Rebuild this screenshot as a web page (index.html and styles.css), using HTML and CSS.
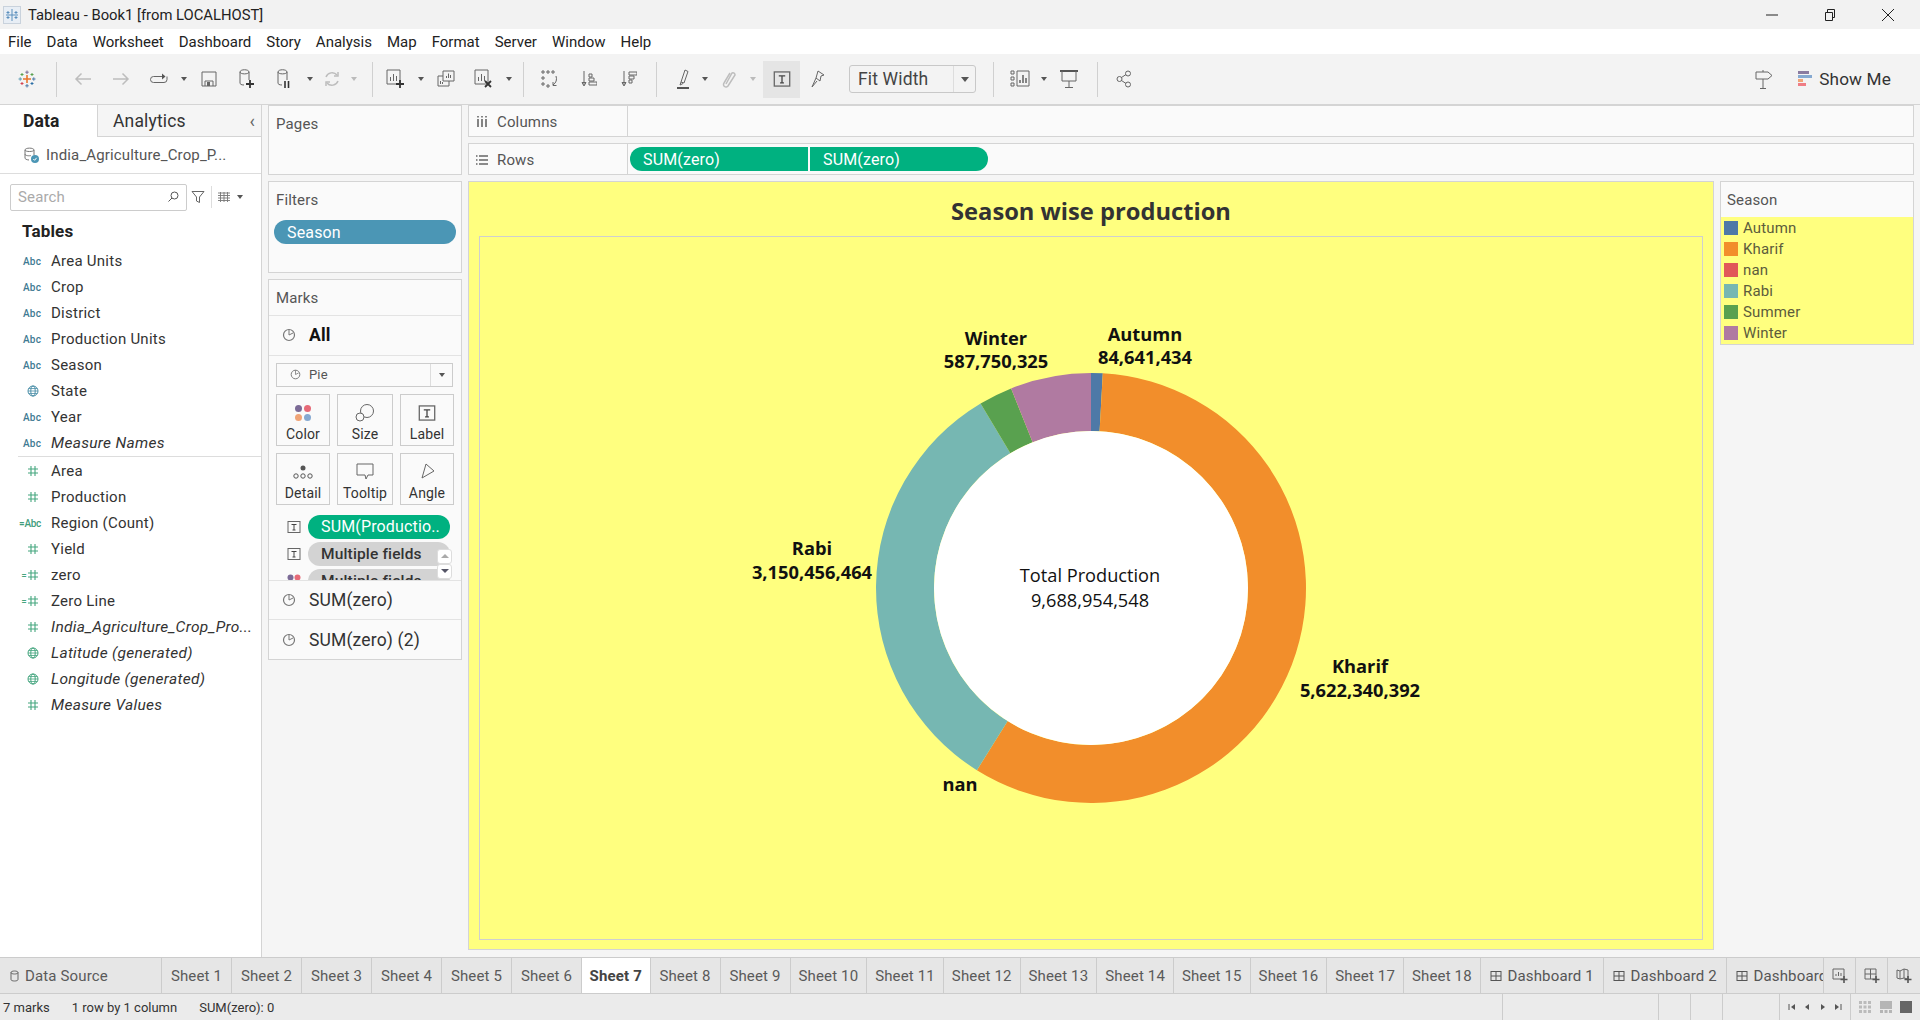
FILE: index.html
```html
<!DOCTYPE html>
<html lang="en">

<head>
    <meta charset="UTF-8">
    <title>Tableau - Book1 [from LOCALHOST]</title>
    <link rel="stylesheet" href="styles.css">
</head>

<body>
    <svg class="defs" width="0" height="0">
        <symbol id="ico-pie" viewBox="0 0 14 14">
            <circle cx="7" cy="7" r="5.5" fill="none" stroke="#777" stroke-width="1.2" />
            <path d="M7 7V1.5M7 7l4-2" fill="none" stroke="#777" />
        </symbol>
        <symbol id="ico-t" viewBox="0 0 14 14">
            <rect x="1" y="1.5" width="12" height="11" fill="none" stroke="#666" />
            <path d="M4.5 4.5h5M7 4.5v5.500M5.500 10h3" fill="none" stroke="#444" />
        </symbol>
        <symbol id="ico-globe" viewBox="0 0 12 12">
            <circle cx="6" cy="6" r="5" fill="none" stroke="currentColor" />
            <ellipse cx="6" cy="6" rx="2.200" ry="5" fill="none" stroke="currentColor" />
            <path d="M1 6h10M1.800 3.500h8.400M1.800 8.500h8.400" fill="none" stroke="currentColor" stroke-width=".8" />
        </symbol>
        <symbol id="ico-hash" viewBox="0 0 12 12">
            <path d="M4 1v10M8 1v10M1 4h10M1 8h10" fill="none" stroke="currentColor" stroke-width="1.100" />
        </symbol>
        <symbol id="ico-dash" viewBox="0 0 12 12">
            <rect x="1" y="1.500" width="10" height="9" fill="none" stroke="#555" />
            <path d="M6 1.500v9M1 6h10" fill="none" stroke="#555" />
        </symbol>
    </svg>

    <header class="titlebar">
        <svg class="app-icon" width="18" height="18" viewBox="0 0 18 18">
            <rect x="0.500" y="0.500" width="17" height="17" fill="#e8eef5" stroke="#c9d2dc" />
            <path d="M9 3v12M3 9h12M5 5v3M3.500 6.500h3M13 5v3M11.500 6.500h3M5 10v3M3.500 11.500h3M13 10v3M11.500 11.500h3" fill="none" stroke="#5b8fbd" />
        </svg>
        <span class="app-title">Tableau - Book1 [from LOCALHOST]</span>
        <div class="win-btns">
            <svg width="14" height="14" viewBox="0 0 14 14"><path d="M1 7h12" stroke="#222" fill="none" /></svg>
            <svg width="14" height="14" viewBox="0 0 14 14"><path d="M2.500 4.500h7v8h-7zM4.500 4.500v-3h7v8h-2" stroke="#222" fill="none" /></svg>
            <svg width="14" height="14" viewBox="0 0 14 14"><path d="M1 1l12 12M13 1L1 13" stroke="#222" fill="none" /></svg>
        </div>
    </header>

    <nav class="menubar">
        <span>File</span><span>Data</span><span>Worksheet</span><span>Dashboard</span><span>Story</span><span>Analysis</span><span>Map</span><span>Format</span><span>Server</span><span>Window</span><span>Help</span>
    </nav>

    <div class="toolbar">
        <div class="group logo-group">
            <svg width="18" height="18" viewBox="0 0 18 18">
                <path d="M9 5v8M5 9h8" stroke="#e8762d" stroke-width="1.600" fill="none" />
                <path d="M9 0.500v3.500M7.300 2.200h3.400" stroke="#7b6a96" fill="none" />
                <path d="M9 14v3.500M7.300 15.800h3.400" stroke="#4e79a7" fill="none" />
                <path d="M0.500 9h3.500M2.200 7.300v3.400" stroke="#5a9bb5" fill="none" />
                <path d="M14 9h3.500M15.800 7.300v3.400" stroke="#4e79a7" fill="none" />
                <path d="M4 3v3M2.500 4.500h3M14 3v3M12.500 4.500h3" stroke="#59a14f" fill="none" />
                <path d="M4 12v3M2.500 13.500h3" stroke="#d64550" fill="none" />
                <path d="M14 12v3M12.500 13.500h3" stroke="#2a6ea6" fill="none" />
            </svg>
        </div>
        <div class="group g-file">
            <span class="tool"><svg width="18" height="14" viewBox="0 0 18 14"><path d="M17 7H2M7.500 1.500L2 7l5.500 5.500" class="ln-off" /></svg></span>
            <span class="tool"><svg width="18" height="14" viewBox="0 0 18 14"><path d="M1 7h15M10.500 1.500L16 7l-5.500 5.500" class="ln-off" /></svg></span>
            <span class="tool"><svg width="20" height="14" viewBox="0 0 20 14"><path d="M16 4.500H4.500a3 3 0 0 0 0 6H15a3 3 0 0 0 3-3v-3" class="ln" /><path d="M13 1.500l3.500 3-3.500 3z" fill="#555" /></svg></span>
            <span class="caret"></span>
            <span class="tool"><svg width="16" height="16" viewBox="0 0 16 16"><path d="M1 1h14v14H1zM4 15v-5h8v5" class="ln" /><path d="M6 11h3v4H6z" fill="#666" /></svg></span>
            <span class="tool"><svg width="18" height="20" viewBox="0 0 18 20"><path d="M2 3c0-3 9-3 9 0v8M2 3v11c0 1 1 2 4 2M2 3c0 2.500 9 2.500 9 0" class="ln" /><path d="M12 11v8M8 15h8" stroke="#333" stroke-width="1.800" fill="none" /></svg></span>
            <span class="tool"><svg width="18" height="20" viewBox="0 0 18 20"><path d="M2 3c0-3 9-3 9 0v8M2 3v11c0 1 1 2 4 2M2 3c0 2.500 9 2.500 9 0" class="ln" /><path d="M9 12v7M12.500 12v7" stroke="#333" stroke-width="1.600" fill="none" /></svg></span>
            <span class="caret"></span>
            <span class="tool w32"><svg width="18" height="18" viewBox="0 0 18 18"><path d="M3 7a6.500 6.500 0 0 1 11-2M15 11a6.500 6.500 0 0 1-11 2" class="ln-off" /><path d="M15 2v4h-4M3 16v-4h4" class="ln-off" /></svg></span>
            <span class="caret off"></span>
        </div>
        <div class="group g-sheet">
            <span class="tool"><svg width="20" height="20" viewBox="0 0 20 20"><path d="M1 1h13v14H1z" class="ln" /><path d="M4.500 12V8M7.500 12V5M10.500 12V7" class="ln" /><path d="M14 11v8M10 15h8" stroke="#333" stroke-width="1.800" fill="none" /></svg></span>
            <span class="caret"></span>
            <span class="tool"><svg width="18" height="18" viewBox="0 0 18 18"><path d="M6 1h11v10H6zM1 6h5M1 6v10h11v-5" class="ln" /><path d="M9.500 8V6M11.500 8V3.500M13.500 8V5M3.500 14v-3M5.500 14v-2" class="ln" /></svg></span>
            <span class="tool"><svg width="20" height="20" viewBox="0 0 20 20"><path d="M1 1h13v14H1z" class="ln" /><path d="M4.500 12V8M7.500 12V5M10.500 12V7" class="ln" /><path d="M11 12l6 6M17 12l-6 6" stroke="#333" stroke-width="1.800" fill="none" /></svg></span>
            <span class="caret"></span>
        </div>
        <div class="group g-sort">
            <span class="tool w40"><svg width="18" height="20" viewBox="0 0 18 20"><path d="M2 2h2v2H2zM7 2h2v2H7zM12 2h2v2h-2zM2 8h2v2H2zM2 14h2v2H2zM7 16h2v2H7z" class="ln" /><path d="M16 7a8 8 0 0 1-3 9M13 13v3.500h3.500" class="ln" /></svg></span>
            <span class="tool w40"><svg width="16" height="18" viewBox="0 0 16 18"><path d="M3 1v14M1 12.500L3 16l2-3.500z" class="ln" /><path d="M8 4h3v3H8zM8 8h5v3H8zM8 12h8v3H8z" class="ln" /></svg></span>
            <span class="tool w40"><svg width="16" height="18" viewBox="0 0 16 18"><path d="M3 1v14M1 12.500L3 16l2-3.500z" class="ln" /><path d="M8 2h8v3H8zM8 6h5v3H8zM8 10h3v3H8z" class="ln" /></svg></span>
        </div>
        <div class="group g-mark">
            <span class="tool w32"><svg width="14" height="22" viewBox="0 0 14 22"><path d="M5 14L9 2l3 1.500L8 15zM5 14l-1 3 3-1.500" class="ln" /><path d="M1 20h12" stroke="#555" stroke-width="2" fill="none" /></svg></span>
            <span class="caret"></span>
            <span class="tool w36"><svg width="14" height="20" viewBox="0 0 14 20"><path d="M4 15l6-11a2 2 0 0 1 3 2L6 17a2.500 2.500 0 0 1-4-3l6-10" class="ln-off" /></svg></span>
            <span class="caret off"></span>
            <span class="tool t-active"><svg width="18" height="18"><use href="#ico-t" /></svg></span>
            <span class="tool w36"><svg width="14" height="18" viewBox="0 0 14 18"><path d="M7 1l6 4-3 1-1 5-4-3zM5 8l-4 9 5-6" class="ln" /></svg></span>
            <div class="fit-select"><span class="fit-text">Fit Width</span><span class="fit-arrow"><span class="caret big"></span></span></div>
        </div>
        <div class="group g-show">
            <span class="tool w36"><svg width="20" height="18" viewBox="0 0 20 18"><path d="M1 1h3v3H1zM1 7h3v3H1zM1 13h3v3H1zM7 1h12v15H7z" class="ln" /><path d="M10 13v-3M13 13V5M16 13V8" stroke="#555" stroke-width="1.400" fill="none" /></svg></span>
            <span class="caret"></span>
            <span class="tool"><svg width="18" height="20" viewBox="0 0 18 20"><path d="M0 2h18" stroke="#555" stroke-width="2" /><path d="M2 2v10h14V2M9 12v6M5 18.500h8" class="ln" /></svg></span>
        </div>
        <div class="group g-share">
            <span class="tool"><svg width="16" height="18" viewBox="0 0 16 18"><circle cx="12" cy="3.500" r="2.500" class="ln" /><circle cx="3.500" cy="9" r="2.500" class="ln" /><circle cx="12" cy="14.500" r="2.500" class="ln" /><path d="M5.500 7.500l4.500-3M5.500 10.500l4.500 3" class="ln" /></svg></span>
        </div>
        <div class="toolbar-right">
            <svg width="18" height="20" viewBox="0 0 18 20"><path d="M1 3h12l4 3.500L13 10H1zM8 1v2M8 10v9M5 19.500h6" class="ln" /></svg>
            <div class="showme">
                <svg width="14" height="16" viewBox="0 0 14 16">
                    <rect width="11" height="3" fill="#8a7ba0" />
                    <rect y="4" width="14" height="3" fill="#86a9d1" />
                    <rect y="8" width="5" height="3" fill="#f0a477" />
                    <rect y="12" width="8" height="3" fill="#ef7d85" />
                </svg>
                <span>Show Me</span>
            </div>
        </div>
    </div>

    <main class="work">
        <aside class="data-pane">
            <div class="pane-tabs">
                <div class="pane-tab current">Data</div>
                <div class="pane-tab other">Analytics<span class="chev">&#8249;</span></div>
            </div>
            <div class="source">
                <svg width="17" height="17" viewBox="0 0 17 17"><path d="M2 3c0-2.500 9-2.500 9 0v5M2 3v8c0 1 1.500 1.800 4 2M2 3c0 2 9 2 9 0M2 7c0 2 5 2 6 1.500" fill="none" stroke="#777" /><circle cx="12" cy="12" r="4" fill="#4b96b5" /><path d="M10.300 12l1.300 1.300 2-2.500" fill="none" stroke="#fff" /></svg>
                <span>India_Agriculture_Crop_P...</span>
            </div>
            <div class="search-row">
                <div class="search"><span>Search</span><svg width="12" height="12" viewBox="0 0 12 12"><circle cx="7.500" cy="4.500" r="3.500" fill="none" stroke="#555" /><path d="M5 7l-3.500 3.500" stroke="#555" fill="none" /></svg></div>
                <svg width="14" height="14" viewBox="0 0 14 14"><path d="M1 1.500h12L8.500 7v5.500l-3-1.500V7z" fill="none" stroke="#666" /></svg>
                <span class="vsep"></span>
                <svg width="12" height="10" viewBox="0 0 12 10"><path d="M0 1h12M0 3.500h12M0 6h12M0 8.500h12M2.500 0v10M6 0v10M9.500 0v10" stroke="#777" stroke-width=".9" fill="none" /></svg>
                <span class="caret"></span>
            </div>
            <h2 class="tables">Tables</h2>
            <ul class="fields">
                <li><i class="abc">Abc</i>Area Units</li>
                <li><i class="abc">Abc</i>Crop</li>
                <li><i class="abc">Abc</i>District</li>
                <li><i class="abc">Abc</i>Production Units</li>
                <li><i class="abc">Abc</i>Season</li>
                <li><i class="ftype dim"><svg width="12" height="12"><use href="#ico-globe" /></svg></i>State</li>
                <li><i class="abc">Abc</i>Year</li>
                <li class="gen"><i class="abc">Abc</i>Measure Names</li>
            </ul>
            <ul class="fields measures">
                <li><i class="ftype mea"><svg width="12" height="12"><use href="#ico-hash" /></svg></i>Area</li>
                <li><i class="ftype mea"><svg width="12" height="12"><use href="#ico-hash" /></svg></i>Production</li>
                <li><i class="abc calc">=Abc</i>Region (Count)</li>
                <li><i class="ftype mea"><svg width="12" height="12"><use href="#ico-hash" /></svg></i>Yield</li>
                <li><i class="ftype mea eq">=<svg width="12" height="12"><use href="#ico-hash" /></svg></i>zero</li>
                <li><i class="ftype mea eq">=<svg width="12" height="12"><use href="#ico-hash" /></svg></i>Zero Line</li>
                <li class="gen"><i class="ftype mea"><svg width="12" height="12"><use href="#ico-hash" /></svg></i>India_Agriculture_Crop_Pro...</li>
                <li class="gen"><i class="ftype mea"><svg width="12" height="12"><use href="#ico-globe" /></svg></i>Latitude (generated)</li>
                <li class="gen"><i class="ftype mea"><svg width="12" height="12"><use href="#ico-globe" /></svg></i>Longitude (generated)</li>
                <li class="gen"><i class="ftype mea"><svg width="12" height="12"><use href="#ico-hash" /></svg></i>Measure Values</li>
            </ul>
        </aside>

        <section class="cards-col">
            <div class="card pages"><div class="card-title">Pages</div></div>
            <div class="card filters">
                <div class="card-title">Filters</div>
                <div class="pill blue">Season</div>
            </div>
            <div class="card marks">
                <div class="card-title marks-title">Marks</div>
                <div class="mark-row all"><svg width="14" height="14"><use href="#ico-pie" /></svg><b>All</b></div>
                <div class="marks-body">
                    <div class="mark-select"><svg width="11" height="11"><use href="#ico-pie" /></svg><span>Pie</span><span class="mark-arrow"><span class="caret"></span></span></div>
                    <div class="mark-btns">
                        <div class="mark-btn">
                            <svg width="18" height="18" viewBox="0 0 18 18"><circle cx="4.500" cy="4.500" r="3.500" fill="#7b6a96" /><circle cx="13.500" cy="4.500" r="3.500" fill="#e66a78" /><circle cx="4.500" cy="13.500" r="3.500" fill="#f0a477" /><circle cx="13.500" cy="13.500" r="3.500" fill="#86a9d1" /></svg>
                            <span>Color</span>
                        </div>
                        <div class="mark-btn">
                            <svg width="20" height="18" viewBox="0 0 20 18"><circle cx="12" cy="7" r="6.500" fill="#fafafa" stroke="#666" /><circle cx="5" cy="13" r="4" fill="#fafafa" stroke="#666" /></svg>
                            <span>Size</span>
                        </div>
                        <div class="mark-btn">
                            <svg width="18" height="18"><use href="#ico-t" /></svg>
                            <span>Label</span>
                        </div>
                        <div class="mark-btn">
                            <svg width="20" height="18" viewBox="0 0 20 18"><circle cx="10" cy="5" r="2.500" fill="#555" /><circle cx="3" cy="13" r="2.200" fill="none" stroke="#555" /><circle cx="10" cy="13" r="2.200" fill="none" stroke="#555" /><circle cx="17" cy="13" r="2.200" fill="none" stroke="#555" /></svg>
                            <span>Detail</span>
                        </div>
                        <div class="mark-btn">
                            <svg width="18" height="18" viewBox="0 0 18 18"><path d="M1 1h16v11h-5l-2 4-1-4H1z" fill="none" stroke="#666" /></svg>
                            <span>Tooltip</span>
                        </div>
                        <div class="mark-btn">
                            <svg width="16" height="18" viewBox="0 0 16 18"><path d="M7 1l8 7-12 7z" fill="none" stroke="#666" /></svg>
                            <span>Angle</span>
                        </div>
                    </div>
                    <div class="mark-list">
                        <div class="mark-field"><svg width="14" height="14"><use href="#ico-t" /></svg><div class="pill green">SUM(Productio..</div></div>
                        <div class="mark-field"><svg width="14" height="14"><use href="#ico-t" /></svg><div class="pill grey">Multiple fields</div></div>
                        <div class="mark-field"><svg width="14" height="14" viewBox="0 0 14 14"><circle cx="3.500" cy="3.500" r="3" fill="#7b6a96" /><circle cx="10.500" cy="3.500" r="3" fill="#e66a78" /><circle cx="3.500" cy="10.500" r="3" fill="#f0a477" /><circle cx="10.500" cy="10.500" r="3" fill="#86a9d1" /></svg><div class="pill grey">Multiple fields</div></div>
                        <div class="scroll-btns">
                            <span class="scroll-btn"><span class="tri up"></span></span>
                            <span class="scroll-btn"><span class="tri down"></span></span>
                        </div>
                    </div>
                </div>
                <div class="mark-row sub"><svg width="14" height="14"><use href="#ico-pie" /></svg><span>SUM(zero)</span></div>
                <div class="mark-row sub"><svg width="14" height="14"><use href="#ico-pie" /></svg><span>SUM(zero) (2)</span></div>
            </div>
        </section>

        <section class="main-col">
            <div class="shelf">
                <div class="shelf-label"><svg width="12" height="12" viewBox="0 0 12 12"><path d="M2 3v8M6 3v8M10 3v8" stroke="#666" stroke-width="1.600" /><path d="M2 0v1.500M6 0v1.500M10 0v1.500" stroke="#666" stroke-width="1.600" /></svg>Columns</div>
            </div>
            <div class="shelf rows">
                <div class="shelf-label"><svg width="12" height="12" viewBox="0 0 12 12"><path d="M3 2h9M3 6h9M3 10h9M0 2h1.500M0 6h1.500M0 10h1.500" stroke="#666" stroke-width="1.400" /></svg>Rows</div>
                <div class="shelf-pills">
                    <div class="pill green first">SUM(zero)</div>
                    <div class="pill green last">SUM(zero)</div>
                </div>
            </div>
            <div class="canvas-row">
                <div class="viz">
                    <h1 class="viz-title">Season wise production</h1>
                    <div class="plot">
                        <svg class="donut" width="1223" height="702" viewBox="0 0 1223 702">
                            <path fill="#4e79a7" d="M611 136A215 215 0 0 1 622.800 136.300L619.600 194.200A157 157 0 0 0 611 194Z" />
                            <path fill="#f28e2b" d="M622.800 136.300A215 215 0 1 1 496.900 533.200L527.700 484.100A157 157 0 1 0 619.600 194.200Z" />
                            <path fill="#76b7b2" d="M496.900 533.200A215 215 0 0 1 500.600 166.500L530.400 216.300A157 157 0 0 0 527.700 484.100Z" />
                            <path fill="#59a14f" d="M500.600 166.500A215 215 0 0 1 531.100 151.400L552.600 205.300A157 157 0 0 0 530.400 216.300Z" />
                            <path fill="#b07aa1" d="M531.100 151.400A215 215 0 0 1 611 136L611 194A157 157 0 0 0 552.600 205.300Z" />
                            <circle cx="611" cy="351" r="157" fill="#fff" />
                            <text class="lbl" text-anchor="middle" x="516" y="108">Winter</text>
                            <text class="lbl" text-anchor="middle" x="516" y="131">587,750,325</text>
                            <text class="lbl" text-anchor="middle" x="665" y="104">Autumn</text>
                            <text class="lbl" text-anchor="middle" x="665" y="127">84,641,434</text>
                            <text class="lbl" text-anchor="middle" x="332" y="318">Rabi</text>
                            <text class="lbl" text-anchor="middle" x="332" y="342">3,150,456,464</text>
                            <text class="lbl" text-anchor="middle" x="880" y="436">Kharif</text>
                            <text class="lbl" text-anchor="middle" x="880" y="460">5,622,340,392</text>
                            <text class="lbl" text-anchor="middle" x="480" y="554">nan</text>
                            <text class="lbl center" text-anchor="middle" x="610" y="345">Total Production</text>
                            <text class="lbl center" text-anchor="middle" x="610" y="370">9,688,954,548</text>
                        </svg>
                    </div>
                </div>
                <aside class="legend">
                    <div class="legend-title">Season</div>
                    <ul class="legend-list">
                        <li><i class="sw s-autumn"></i>Autumn</li>
                        <li><i class="sw s-kharif"></i>Kharif</li>
                        <li><i class="sw s-nan"></i>nan</li>
                        <li><i class="sw s-rabi"></i>Rabi</li>
                        <li><i class="sw s-summer"></i>Summer</li>
                        <li><i class="sw s-winter"></i>Winter</li>
                    </ul>
                </aside>
            </div>
        </section>
    </main>

    <footer>
        <div class="tabbar">
            <div class="tabs">
                <div class="tab source-tab"><svg width="9" height="12" viewBox="0 0 9 12"><path d="M1 2.500c0-2 7-2 7 0v7c0 2-7 2-7 0zM1 2.500c0 2 7 2 7 0" fill="none" stroke="#666" /></svg>Data Source</div>
                <div class="tab">Sheet 1</div>
                <div class="tab">Sheet 2</div>
                <div class="tab">Sheet 3</div>
                <div class="tab">Sheet 4</div>
                <div class="tab">Sheet 5</div>
                <div class="tab">Sheet 6</div>
                <div class="tab current">Sheet 7</div>
                <div class="tab">Sheet 8</div>
                <div class="tab">Sheet 9</div>
                <div class="tab wide">Sheet 10</div>
                <div class="tab wide">Sheet 11</div>
                <div class="tab wide">Sheet 12</div>
                <div class="tab wide">Sheet 13</div>
                <div class="tab wide">Sheet 14</div>
                <div class="tab wide">Sheet 15</div>
                <div class="tab wide">Sheet 16</div>
                <div class="tab wide">Sheet 17</div>
                <div class="tab wide">Sheet 18</div>
                <div class="tab dash"><svg width="12" height="12"><use href="#ico-dash" /></svg>Dashboard 1</div>
                <div class="tab dash"><svg width="12" height="12"><use href="#ico-dash" /></svg>Dashboard 2</div>
                <div class="tab dash"><svg width="12" height="12"><use href="#ico-dash" /></svg>Dashboard 3</div>
            </div>
            <div class="tab-add"><svg width="16" height="16" viewBox="0 0 16 16"><path d="M1 1h11v10H1zM4 8V6M6.500 8V4M9 8V5" class="ln" /><path d="M12 8v7M8.500 11.500h7" stroke="#555" stroke-width="1.600" /></svg></div>
            <div class="tab-add"><svg width="16" height="16" viewBox="0 0 16 16"><path d="M1 1h11v10H1zM6.500 1v10M1 6h11" class="ln" /><path d="M12 8v7M8.500 11.500h7" stroke="#555" stroke-width="1.600" /></svg></div>
            <div class="tab-add"><svg width="16" height="16" viewBox="0 0 16 16"><path d="M1 2l3 1 4-2 4 1v9l-4-1-4 1-3-1zM4 3v8M8 1v9" class="ln" /><path d="M12 8v7M8.500 11.500h7" stroke="#555" stroke-width="1.600" /></svg></div>
        </div>
        <div class="statusbar">
            <span class="st st1">7 marks</span>
            <span class="st st2">1 row by 1 column</span>
            <span class="st st3">SUM(zero): 0</span>
            <span class="st-cell c1"></span>
            <span class="st-cell c2"></span>
            <span class="st-cell c3"></span>
            <span class="st-cell c4"></span>
            <div class="st-cell pager">
                <svg width="8" height="8" viewBox="0 0 8 8"><path d="M1 1v6" stroke="#555" /><path d="M7 1v6L3 4z" fill="#555" /></svg>
                <svg width="8" height="8" viewBox="0 0 8 8"><path d="M6 1v6L2 4z" fill="#555" /></svg>
                <svg width="8" height="8" viewBox="0 0 8 8"><path d="M2 1v6l4-3z" fill="#555" /></svg>
                <svg width="8" height="8" viewBox="0 0 8 8"><path d="M7 1v6" stroke="#555" /><path d="M1 1v6l4-3z" fill="#555" /></svg>
            </div>
            <div class="st-cell views">
                <svg width="12" height="12" viewBox="0 0 12 12"><path d="M0 0h3v3H0zM4.500 0h3v3h-3zM9 0h3v3H9zM0 4.500h3v3H0zM4.500 4.500h3v3h-3zM9 4.500h3v3H9zM0 9h3v3H0zM4.500 9h3v3h-3zM9 9h3v3H9z" fill="#bbb" /></svg>
                <svg width="12" height="12" viewBox="0 0 12 12"><path d="M0 0h12v8H0zM0 9h3v3H0zM4.500 9h3v3h-3zM9 9h3v3H9z" fill="#b5b5b5" /></svg>
                <svg width="12" height="12" viewBox="0 0 12 12"><path d="M0 0h12v12H0z" fill="#666" /></svg>
            </div>
        </div>
    </footer>
</body>

</html>
```

FILE: styles.css
```css
* {
    box-sizing: border-box;
}

html,
body {
    margin: 0;
    height: 100%;
    overflow: hidden;
}

body {
    display: flex;
    flex-direction: column;
    width: 1920px;
    height: 1020px;
    font-family: Roboto, "Noto Sans", sans-serif;
    font-size: 15px;
    letter-spacing: 0.15px;
    color: #444;
    background: #f5f5f5;
}

ul {
    list-style: none;
    margin: 0;
    padding: 0;
}

i {
    font-style: normal;
}

.defs {
    position: absolute;
}

.ln {
    fill: none;
    stroke: #666;
}

.ln-off {
    fill: none;
    stroke: #bdbdbd;
    stroke-width: 1.5;
}

/* title + menu */
.titlebar {
    height: 29px;
    background: #f2f2f2;
    display: flex;
    align-items: center;
    padding-left: 3px;
    font-size: 14.8px;
    letter-spacing: 0;
    color: #222;
}

.app-title {
    margin-left: 7px;
}

.win-btns {
    margin-left: auto;
    display: flex;
    gap: 44px;
    padding-right: 25px;
}

.menubar {
    height: 25px;
    background: #fff;
    display: flex;
    align-items: center;
    gap: 15px;
    padding-left: 8px;
    letter-spacing: 0;
    color: #222;
}

/* toolbar */
.toolbar {
    height: 51px;
    background: #f3f3f3;
    border-bottom: 1px solid #d4d4d4;
    display: flex;
    align-items: center;
}

.group {
    display: flex;
    align-items: center;
    height: 35px;
    border-right: 1px solid #d0d0d0;
}

.logo-group {
    width: 57px;
    padding-left: 18px;
}

.g-file {
    width: 316px;
    padding-left: 7px;
}

.g-sheet {
    width: 151px;
    padding-left: 4px;
}

.g-sort {
    width: 133px;
    padding-left: 5px;
}

.g-mark {
    width: 337px;
    padding-left: 10px;
}

.g-show {
    width: 104px;
    padding-left: 8px;
}

.g-share {
    border-right: 0;
    padding-left: 7px;
}

.tool {
    width: 38px;
    height: 35px;
    display: flex;
    align-items: center;
    justify-content: center;
    flex: none;
}

.w32 {
    width: 32px;
}

.w36 {
    width: 36px;
}

.w40 {
    width: 40px;
}

.t-active {
    width: 37px;
    height: 37px;
    margin-left: 4px;
    background: #e5e5e5;
}

.caret {
    flex: none;
    width: 0;
    height: 0;
    margin: 0 3px;
    border-left: 3px solid transparent;
    border-right: 3px solid transparent;
    border-top: 4px solid #555;
}

.caret.off {
    border-top-color: #bbb;
}

.caret.big {
    border-left-width: 4px;
    border-right-width: 4px;
    border-top-width: 5px;
}

.fit-select {
    width: 127px;
    height: 28px;
    margin-left: 13px;
    border: 1px solid #c8c8c8;
    border-radius: 3px;
    display: flex;
    align-items: center;
    font-size: 17.5px;
    color: #444;
}

.fit-text {
    flex: 1;
    padding-left: 8px;
}

.fit-arrow {
    width: 22px;
    height: 100%;
    border-left: 1px solid #ddd;
    display: flex;
    align-items: center;
    justify-content: center;
}

.toolbar-right {
    margin-left: auto;
    display: flex;
    align-items: center;
    gap: 25px;
    padding-right: 29px;
}

.showme {
    display: flex;
    align-items: center;
    gap: 7px;
    font-size: 17.2px;
    color: #333;
}

/* work area */
.work {
    height: 852px;
    display: flex;
}

.data-pane {
    width: 262px;
    background: #fff;
    border-right: 1px solid #d4d4d4;
    color: #333;
}

.pane-tabs {
    height: 32px;
    display: flex;
    font-size: 17.5px;
}

.pane-tab {
    display: flex;
    align-items: center;
}

.pane-tab.current {
    width: 98px;
    padding-left: 23px;
    font-weight: 700;
    color: #222;
    border-right: 1px solid #d4d4d4;
}

.pane-tab.other {
    flex: 1;
    padding-left: 15px;
    background: #f5f5f5;
    border-bottom: 1px solid #d4d4d4;
    position: relative;
}

.chev {
    margin-left: auto;
    margin-right: 6px;
    color: #666;
    font-size: 18px;
}

.source {
    height: 37px;
    display: flex;
    align-items: center;
    gap: 6px;
    padding-left: 23px;
    border-bottom: 1px solid #ddd;
    color: #555;
}

.search-row {
    display: flex;
    align-items: center;
    height: 46px;
    padding-left: 10px;
}

.search {
    width: 177px;
    height: 27px;
    border: 1px solid #ccc;
    border-radius: 2px;
    display: flex;
    align-items: center;
    justify-content: space-between;
    padding: 0 7px;
    margin-right: 4px;
    color: #aaa;
}

.vsep {
    width: 1px;
    height: 22px;
    margin: 0 6px 0 6px;
    background: #ddd;
}

.search-row .caret {
    margin-left: 7px;
}

.tables {
    margin: 0 0 6px;
    height: 22px;
    padding-left: 22px;
    font-size: 17px;
    line-height: 22px;
    font-weight: 700;
    color: #222;
}

.fields li {
    height: 26px;
    display: flex;
    align-items: center;
    white-space: nowrap;
    letter-spacing: 0.25px;
}

.fields i {
    flex: none;
    width: 41px;
    margin-right: 10px;
    text-align: right;
}

.fields .gen {
    font-style: italic;
    font-size: 15.5px;
    letter-spacing: 0.3px;
}

.measures {
    border-top: 1px solid #ddd;
    margin-left: 18px;
    padding-top: 1px;
}

.measures i {
    width: 23px;
}

.fields .abc {
    font-size: 10px;
    font-style: normal;
    font-weight: 500;
    letter-spacing: 0.15px;
    color: #3f7a92;
}

.fields .abc.calc {
    color: #3f9d7c;
    letter-spacing: -0.3px;
}

.fields .ftype {
    display: flex;
    align-items: center;
    justify-content: flex-end;
    padding-right: 2px;
    font-style: normal;
    font-size: 10px;
}

.ftype.dim {
    color: #4b8fa8;
}

.ftype.mea {
    color: #45a67f;
}

.cards-col {
    width: 194px;
    margin-left: 6px;
    display: flex;
    flex-direction: column;
    gap: 6px;
    padding-top: 0;
}

.card {
    background: #fafafa;
    border: 1px solid #d4d4d4;
}

.card-title {
    color: #555;
    padding-left: 7px;
}

.pages {
    height: 70px;
    padding-top: 9px;
}

.filters {
    height: 92px;
    padding-top: 9px;
}

.pill {
    height: 24px;
    border-radius: 12px;
    display: flex;
    align-items: center;
    padding-left: 13px;
    white-space: nowrap;
    font-size: 16px;
}

.pill.blue {
    margin: 11px 5px 0;
    background: #4b96b5;
    color: #fff;
}

.pill.green {
    background: #00b180;
    color: #fff;
}

.pill.grey {
    background: #d3d3d3;
    color: #333;
    font-size: 15.5px;
    font-weight: 500;
}

.marks {
    height: 381px;
    display: flex;
    flex-direction: column;
}

.marks-title {
    height: 36px;
    line-height: 36px;
    border-bottom: 1px solid #e3e3e3;
}

.mark-row {
    display: flex;
    align-items: center;
    gap: 13px;
    padding-left: 13px;
    height: 40px;
    color: #333;
    font-size: 17.5px;
}

.mark-row b {
    color: #111;
    font-weight: 700;
}

.mark-row.all {
    border-bottom: 1px solid #e3e3e3;
}

.mark-row.sub {
    border-top: 1px solid #e3e3e3;
}

.marks-body {
    height: 224px;
    padding: 7px 8px 0 7px;
}

.mark-select {
    height: 24px;
    border: 1px solid #ccc;
    display: flex;
    align-items: center;
    gap: 8px;
    padding-left: 13px;
    font-size: 13px;
    color: #555;
}

.mark-arrow {
    margin-left: auto;
    width: 22px;
    height: 100%;
    border-left: 1px solid #ddd;
    display: flex;
    align-items: center;
    justify-content: center;
}

.mark-btns {
    display: grid;
    grid-template-columns: 54px 56px 54px;
    grid-auto-rows: 52px;
    gap: 7px;
    margin-top: 7px;
}

.mark-btn {
    border: 1px solid #ccc;
    display: flex;
    flex-direction: column;
    align-items: center;
    justify-content: flex-end;
    gap: 3px;
    padding-bottom: 2px;
    font-size: 14px;
    line-height: 18px;
    color: #333;
}

.mark-list {
    height: 65px;
    margin-top: 10px;
    padding-left: 11px;
    overflow: hidden;
    position: relative;
}

.mark-field {
    display: flex;
    align-items: center;
    gap: 7px;
    height: 24px;
    margin-bottom: 3px;
}

.mark-field .pill {
    width: 142px;
}

.scroll-btns {
    position: absolute;
    top: 34px;
    right: 1px;
    width: 15px;
    display: flex;
    flex-direction: column;
}

.scroll-btn {
    height: 15px;
    background: #fff;
    border: 1px solid #ddd;
    border-radius: 3px;
    display: flex;
    align-items: center;
    justify-content: center;
}

.tri {
    width: 0;
    height: 0;
    border-left: 4px solid transparent;
    border-right: 4px solid transparent;
}

.tri.up {
    border-bottom: 4px solid #aaa;
}

.tri.down {
    border-top: 4px solid #556;
}

/* shelves + view */
.main-col {
    width: 1446px;
    margin-left: 6px;
    display: flex;
    flex-direction: column;
}

.shelf {
    height: 32px;
    background: #fafafa;
    border: 1px solid #d4d4d4;
    display: flex;
    align-items: stretch;
}

.shelf.rows {
    margin-top: 6px;
}

.shelf-label {
    width: 159px;
    display: flex;
    align-items: center;
    gap: 9px;
    padding: 1px 0 0 7px;
    border-right: 1px solid #d4d4d4;
    color: #555;
}

.shelf-pills {
    display: flex;
    gap: 2px;
    padding: 3px 0 0 2px;
}

.shelf-pills .pill {
    width: 178px;
}

.pill.first {
    border-radius: 12px 0 0 12px;
}

.pill.last {
    border-radius: 0 12px 12px 0;
}

.canvas-row {
    display: flex;
    gap: 6px;
    margin-top: 6px;
}

.viz {
    width: 1246px;
    height: 769px;
    background: #ffff7f;
    border: 1px solid #d4d4d4;
    padding: 0 10px 10px;
    display: flex;
    flex-direction: column;
}

.viz-title {
    margin: 0;
    height: 54px;
    line-height: 58px;
    text-align: center;
    font-family: "Open Sans", sans-serif;
    font-size: 23.7px;
    font-weight: 700;
    letter-spacing: 0;
    color: #333;
}

.plot {
    flex: 1;
    border: 1px solid #cfcfcf;
}

.donut {
    display: block;
}

.lbl {
    font-family: "Open Sans", sans-serif;
    font-size: 18.3px;
    font-weight: 700;
    letter-spacing: 0;
    fill: #111;
}

.lbl.center {
    font-weight: 500;
    font-size: 18.2px;
}

.legend {
    width: 194px;
    height: 164px;
    background: #fafafa;
    border: 1px solid #d4d4d4;
}

.legend-title {
    height: 35px;
    line-height: 36px;
    padding-left: 6px;
    color: #555;
}

.legend-list {
    height: 127px;
    background: #ffff7f;
    padding: 0 0 0 3px;
}

.legend-list li {
    height: 21px;
    display: flex;
    align-items: center;
    gap: 5px;
    color: #5c5c3c;
}

.sw {
    width: 14px;
    height: 14px;
}

.s-autumn {
    background: #4e79a7;
}

.s-kharif {
    background: #f28e2b;
}

.s-nan {
    background: #e15759;
}

.s-rabi {
    background: #76b7b2;
}

.s-summer {
    background: #59a14f;
}

.s-winter {
    background: #b07aa1;
}

/* bottom */
footer {
    flex: none;
}

.tabbar {
    height: 37px;
    display: flex;
    background: #e6e6e6;
    border-top: 1px solid #ccc;
    border-bottom: 1px solid #ccc;
}

.tabs {
    width: 1823px;
    display: flex;
    overflow: hidden;
}

.tab {
    flex: none;
    width: 70px;
    display: flex;
    align-items: center;
    justify-content: center;
    border-right: 1px solid #ccc;
    color: #5a5a5a;
    gap: 6px;
}

.tab.wide {
    width: 76.7px;
}

.tab.source-tab {
    width: 162px;
    justify-content: flex-start;
    padding-left: 10px;
}

.tab.current {
    width: 68.5px;
    background: #fff;
    font-weight: 700;
    color: #444;
}

.tab.dash {
    width: 123px;
    color: #555;
}

.tab-add {
    width: 32px;
    border-left: 1px solid #ccc;
    display: flex;
    align-items: center;
    justify-content: center;
}

.statusbar {
    height: 26px;
    background: #ebebeb;
    display: flex;
    align-items: center;
    font-size: 13px;
    letter-spacing: 0;
    color: #333;
}

.st1 {
    margin-left: 3px;
}

.st2 {
    margin-left: 22px;
}

.st3 {
    margin-left: 22px;
}

.st-cell {
    height: 100%;
    border-left: 1px solid #ccc;
    display: flex;
    align-items: center;
}

.c1 {
    margin-left: auto;
    width: 156px;
}

.c2,
.c3 {
    width: 32px;
}

.c4 {
    width: 57px;
}

.pager {
    width: 71px;
    justify-content: space-evenly;
}

.views {
    width: 70px;
    justify-content: space-evenly;
}
```
